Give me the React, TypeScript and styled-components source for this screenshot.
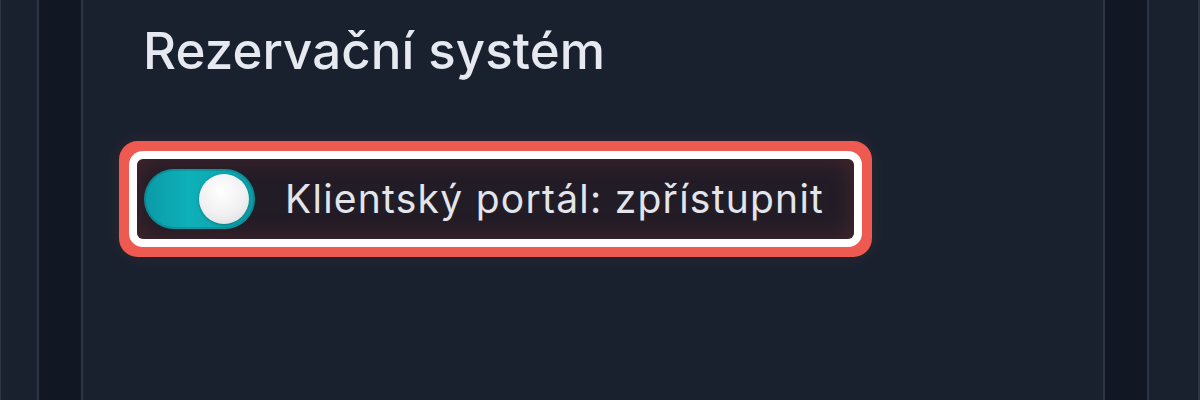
import React, { useState } from "react";
import styled, { createGlobalStyle } from "styled-components";

const GlobalStyle = createGlobalStyle`
  html, body {
    margin: 0;
    padding: 0;
    background: #111723;
    overflow: hidden;
  }
  body {
    font-family: Inter, "Noto Sans", "Liberation Sans", sans-serif;
  }
`;

const App: React.FC = () => {
  const [portalOn, setPortalOn] = useState(true);

  return (
    <>
      <GlobalStyle />
      <Page>
        <SideColumn />
        <Card>
          <CardTitle>Rezervační systém</CardTitle>
          <SettingRow $highlighted>
            <Toggle
              type="button"
              role="switch"
              aria-checked={portalOn}
              $on={portalOn}
              onClick={() => setPortalOn(!portalOn)}
            >
              <Knob $on={portalOn} />
            </Toggle>
            <SettingLabel>Klientský portál: zpřístupnit</SettingLabel>
          </SettingRow>
        </Card>
        <SideColumn />
      </Page>
    </>
  );
};

export default App;

const Page = styled.div`
  display: grid;
  grid-template-columns: 40px 1fr 53px;
  column-gap: 42px;
  height: 400px;
  margin-left: -1px;
`;

// columns run past the top and bottom of the view, so only side borders show
const SideColumn = styled.div`
  background: #19212f;
  border-left: 2px solid #2c3644;
  border-right: 2px solid #2c3644;
`;

const Card = styled.section`
  background: #19212f;
  border-left: 2px solid #2c3644;
  border-right: 2px solid #2c3644;
  padding: 21px 54px 0;
  display: flex;
  flex-direction: column;
  align-items: flex-start;
`;

const CardTitle = styled.h2`
  margin: 0 0 78px 6px;
  font-size: 51px;
  line-height: 60px;
  font-weight: 500;
  color: #e6e9f0;
  letter-spacing: 0.1px;
`;

const SettingRow = styled.label<{ $highlighted?: boolean }>`
  display: inline-flex;
  align-items: center;
  gap: 30px;
  padding: 10px 30px 10px 7px;
  border-radius: 6px;
  background: #221c26;
  cursor: pointer;
  box-shadow: ${(p) =>
    p.$highlighted
      ? "inset 0 0 26px rgba(239, 83, 80, 0.18), 0 0 0 8px #ffffff, 0 0 0 18px #ee5a4f, 0 0 16px 18px rgba(238, 90, 79, 0.12)"
      : "none"};
`;

const Toggle = styled.button<{ $on: boolean }>`
  position: relative;
  width: 111px;
  height: 60px;
  flex: none;
  border: none;
  padding: 0;
  border-radius: 30px;
  cursor: pointer;
  background: ${(p) =>
    p.$on
      ? "linear-gradient(90deg, #0b9aa6 0%, #0eb0ba 40%, #0c9ea8 100%)"
      : "#3a4352"};
  box-shadow: inset 0 0 0 2px rgba(0, 0, 0, 0.12);
`;

const Knob = styled.span<{ $on: boolean }>`
  position: absolute;
  top: 5px;
  left: ${(p) => (p.$on ? "55px" : "5px")};
  width: 50px;
  height: 50px;
  border-radius: 50%;
  background: radial-gradient(circle at 45% 35%, #ffffff 0%, #f0f0f2 55%, #d8d8dc 100%);
  box-shadow: 0 1px 3px rgba(0, 0, 0, 0.3);
`;

const SettingLabel = styled.span`
  font-size: 39px;
  line-height: 44px;
  font-weight: 400;
  letter-spacing: 1.25px;
  color: #e2e5ec;
  white-space: nowrap;
`;
